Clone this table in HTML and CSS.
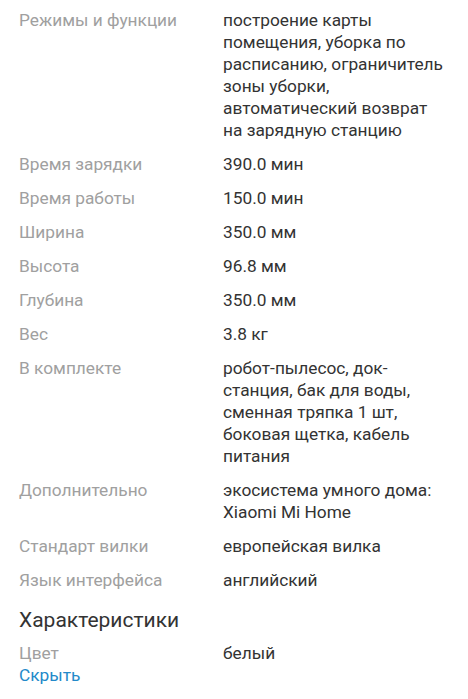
FILE: index.html
```html
<!DOCTYPE html>
<html lang="ru">
<head>
<meta charset="utf-8">
<link rel="stylesheet" href="styles.css">
</head>
<body>
<div class="page">
  <dl class="specs">
    <div class="row"><dt>Режимы и функции</dt><dd>построение карты помещения, уборка по расписанию, ограничитель зоны уборки, автоматический возврат на зарядную станцию</dd></div>
    <div class="row"><dt>Время зарядки</dt><dd>390.0 мин</dd></div>
    <div class="row"><dt>Время работы</dt><dd>150.0 мин</dd></div>
    <div class="row"><dt>Ширина</dt><dd>350.0 мм</dd></div>
    <div class="row"><dt>Высота</dt><dd>96.8 мм</dd></div>
    <div class="row"><dt>Глубина</dt><dd>350.0 мм</dd></div>
    <div class="row"><dt>Вес</dt><dd>3.8 кг</dd></div>
    <div class="row"><dt>В комплекте</dt><dd>робот-пылесос, док-станция, бак для воды, сменная тряпка 1 шт, боковая щетка, кабель питания</dd></div>
    <div class="row"><dt>Дополнительно</dt><dd>экосистема умного дома: Xiaomi Mi Home</dd></div>
    <div class="row"><dt>Стандарт вилки</dt><dd>европейская вилка</dd></div>
    <div class="row"><dt>Язык интерфейса</dt><dd>английский</dd></div>
  </dl>
  <h2 class="section-title">Характеристики</h2>
  <dl class="specs">
    <div class="row"><dt>Цвет</dt><dd>белый</dd></div>
  </dl>
  <a class="toggle" href="#">Скрыть</a>
</div>
</body>
</html>
```

FILE: styles.css
```css
html, body {
  margin: 0;
  padding: 0;
  background: #ffffff;
}
body {
  font-family: Roboto, "Noto Sans", sans-serif;
  font-size: 17.3px;
  line-height: 22px;
  color: #333333;
}
.page {
  padding: 9px 19px 0 19px;
}
.specs {
  margin: 0;
  display: flex;
  flex-direction: column;
  gap: 12px;
}
.row {
  display: grid;
  grid-template-columns: 204px 1fr;
}
.row dt {
  color: #a0a0a0;
}
.row dd {
  margin: 0;
  color: #333333;
}
.section-title {
  margin: 15px 0 8px 0;
  font-size: 21px;
  line-height: 28px;
  font-weight: 400;
  color: #333333;
}
.toggle {
  display: block;
  color: #2389c9;
  text-decoration: none;
  line-height: 22px;
}
```
